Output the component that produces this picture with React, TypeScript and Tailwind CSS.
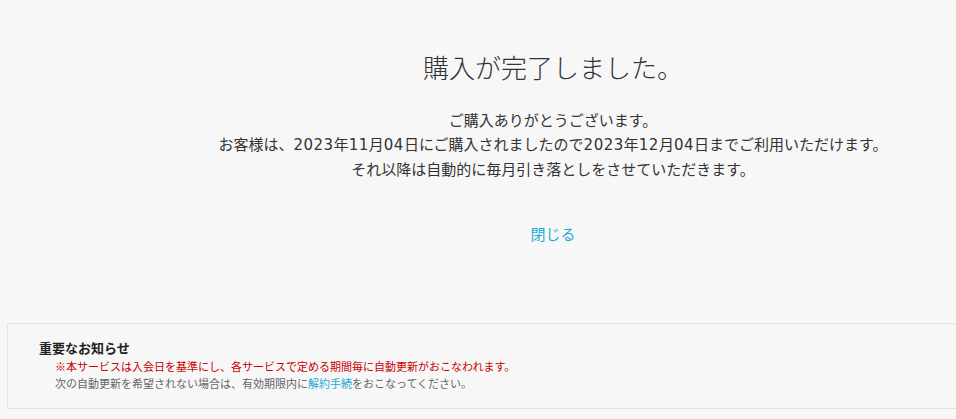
function Num({ children }: { children: string }) {
  return (
    <span
      className="tracking-[0.5px]"
      style={{ fontFamily: '"DejaVu Sans", sans-serif' }}
    >
      {children}
    </span>
  );
}

export default function App() {
  return (
    <div
      className="min-h-[419px] bg-[#f7f7f7] text-[#333] overflow-hidden"
      style={{ fontFamily: '"Noto Sans CJK JP", "Noto Sans", sans-serif' }}
    >
      <div className="pl-[150px] pt-[49px] flex flex-col items-center text-center">
        <h1 className="text-[26px] leading-[36px] font-light text-[#333]">
          購入が完了しました。
        </h1>
        <div className="mt-[23px] text-[15px] leading-[23.5px]">
          <p>ご購入ありがとうございます。</p>
          <p>
            お客様は、<Num>2023</Num>年<Num>11</Num>月<Num>04</Num>日にご購入されましたので
            <Num>2023</Num>年<Num>12</Num>月<Num>04</Num>日までご利用いただけます。
          </p>
          <p>それ以降は自動的に毎月引き落としをさせていただきます。</p>
        </div>
        <a
          href="#"
          className="mt-[41px] text-[15px] leading-[23.5px] text-[#1eaad6]"
        >
          閉じる
        </a>
      </div>

      <div className="mt-[78px] ml-[7px] w-[970px] border border-[#e3e3e3] pl-[31px] pt-[14px] pb-[16px]">
        <h2 className="text-[13px] leading-[20px] font-bold text-[#222]">
          重要なお知らせ
        </h2>
        <div className="pl-[16px] text-[11px] leading-[17px] text-[#666]">
          <p className="text-[#c80000]">
            ※本サービスは入会日を基準にし、各サービスで定める期間毎に自動更新がおこなわれます。
          </p>
          <p>
            次の自動更新を希望されない場合は、有効期限内に
            <a href="#" className="text-[#1eaad6]">
              解約手続
            </a>
            をおこなってください。
          </p>
        </div>
      </div>
    </div>
  );
}
